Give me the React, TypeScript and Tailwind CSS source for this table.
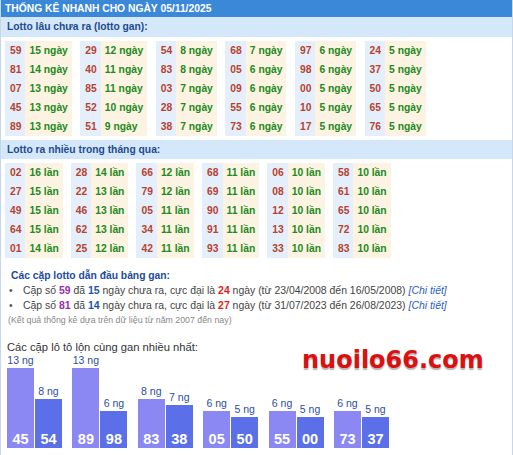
import React from "react";

type Cell = [string, number];

const gan: Cell[][] = [
  [["59", 15], ["81", 14], ["07", 13], ["45", 13], ["89", 13]],
  [["29", 12], ["40", 11], ["85", 11], ["52", 10], ["51", 9]],
  [["54", 8], ["83", 8], ["03", 7], ["28", 7], ["38", 7]],
  [["68", 7], ["05", 6], ["09", 6], ["55", 6], ["73", 6]],
  [["97", 6], ["98", 6], ["00", 5], ["10", 5], ["17", 5]],
  [["24", 5], ["37", 5], ["50", 5], ["65", 5], ["76", 5]],
];

const nhieu: Cell[][] = [
  [["02", 16], ["27", 15], ["49", 15], ["64", 15], ["01", 14]],
  [["28", 14], ["22", 13], ["46", 13], ["62", 13], ["25", 12]],
  [["66", 12], ["79", 12], ["05", 11], ["34", 11], ["42", 11]],
  [["68", 11], ["69", 11], ["90", 11], ["91", 11], ["93", 11]],
  [["06", 10], ["08", 10], ["12", 10], ["13", 10], ["33", 10]],
  [["58", 10], ["61", 10], ["65", 10], ["72", 10], ["83", 10]],
];

const bars: [string, number, string, number][] = [
  ["45", 13, "54", 8],
  ["89", 13, "98", 6],
  ["83", 8, "38", 7],
  ["05", 6, "50", 5],
  ["55", 6, "00", 5],
  ["73", 6, "37", 5],
];

function Grid({ data, unit, wide }: { data: Cell[][]; unit: string; wide?: boolean }) {
  return (
    <div className={`flex ml-[4px] mt-[4px] ${wide ? "gap-[8.5px]" : "gap-[8px]"}`}>
      {data.map((col, i) => (
        <div key={i} className="grid grid-cols-[auto_auto]">
          {col.map(([n, v], j) => (
            <React.Fragment key={j}>
              <div className="h-[19px] leading-[19px] bg-[#e5effb] pl-[5px] pr-[4px] text-[#b8412f] font-bold">
                {n}
              </div>
              <div className="h-[19px] leading-[19px] bg-[#fdf3e3] pl-[4px] pr-[4px] text-[#218a21] font-bold">
                {v} {unit}
              </div>
            </React.Fragment>
          ))}
        </div>
      ))}
    </div>
  );
}

function Bar({ n, v, light }: { n: string; v: number; light: boolean }) {
  return (
    <div className="flex flex-col items-center w-[27px]">
      <div className="text-[10.5px] leading-[12px] text-[#2b4ea2] mb-[2px] whitespace-nowrap">
        {v} ng
      </div>
      <div
        className={`w-full flex flex-col justify-end items-center ${light ? "bg-[#8b88f4]" : "bg-[#5b70e8]"}`}
        style={{ height: `${Math.round(v * 6.15)}px` }}
      >
        <span className="text-white font-bold text-[14.5px] leading-[16px] pb-[1px]">{n}</span>
      </div>
    </div>
  );
}

export default function App() {
  return (
    <div className="relative w-[513px] h-[455px] overflow-hidden bg-white border-x border-[#c6d7ec] font-['Liberation_Sans',Arial,sans-serif] text-[10.3px]">
      <div className="h-[17px] leading-[17px] bg-[#3b87d8] text-white font-bold pl-[4px]">
        THỐNG KÊ NHANH CHO NGÀY 05/11/2025
      </div>
      <div className="h-[20px] leading-[20px] bg-[#d5e7fa] text-[#1d4c8e] font-bold pl-[6px]">
        Lotto lâu chưa ra (lotto gan):
      </div>
      <Grid data={gan} unit="ngày" wide />
      <div className="mt-[4px] h-[19px] leading-[19px] bg-[#d5e7fa] text-[#1d4c8e] font-bold pl-[6px]">
        Lotto ra nhiều trong tháng qua:
      </div>
      <Grid data={nhieu} unit="lần" />

      <div className="mt-[10px] pl-[10px] text-[#1d4c9c] font-bold leading-[15px]">
        Các cặp lotto dẫn đầu bảng gan:
      </div>
      <div className="text-[#444] leading-[15px] text-[10.45px]">
        <div className="flex">
          <span className="w-[22px] pl-[8px] text-[#555]">•</span>
          <span>
            Cặp số <b className="text-[#9a2bb0]">59</b> đã <b className="text-[#1b55b3]">15</b> ngày chưa ra, cực đại là{" "}
            <b className="text-[#e11d1d]">24</b> ngày (từ 23/04/2008 đến 16/05/2008){" "}
            <i className="text-[#2a5cc0]">[Chi tiết]</i>
          </span>
        </div>
        <div className="flex">
          <span className="w-[22px] pl-[8px] text-[#555]">•</span>
          <span>
            Cặp số <b className="text-[#9a2bb0]">81</b> đã <b className="text-[#1b55b3]">14</b> ngày chưa ra, cực đại là{" "}
            <b className="text-[#e11d1d]">27</b> ngày (từ 31/07/2023 đến 26/08/2023){" "}
            <i className="text-[#2a5cc0]">[Chi tiết]</i>
          </span>
        </div>
      </div>
      <div className="pl-[7px] text-[8.8px] leading-[15px] text-[#888]">
        (Kết quả thống kê dựa trên dữ liệu từ năm 2007 đến nay)
      </div>

      <div className="mt-[12px] pl-[6px] text-[11.2px] leading-[15px] text-[#333]">
        Các cặp lô tô lộn cùng gan nhiều nhất:
      </div>
      <div className="flex items-end gap-[10.4px] pl-[6px] h-[93px]">
        {bars.map(([a, av, b, bv], i) => (
          <div key={i} className="flex items-end gap-[1px]">
            <Bar n={a} v={av} light />
            <Bar n={b} v={bv} light={false} />
          </div>
        ))}
      </div>

      <div className="absolute left-[301px] top-[345px] font-['DejaVu_Sans',sans-serif] font-bold text-[24px] leading-[30px] text-[#dc1010] [text-shadow:0px_2px_1px_#b5b5b5]">
        nuoilo66.com
      </div>
    </div>
  );
}
